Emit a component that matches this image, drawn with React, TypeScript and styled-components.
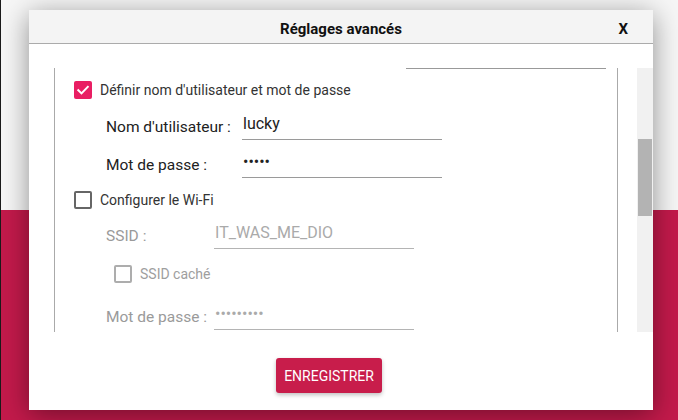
import React from "react";
import styled, { createGlobalStyle } from "styled-components";

const Global = createGlobalStyle`
  html, body { margin: 0; padding: 0; }
  body {
    font-family: Roboto, "Liberation Sans", sans-serif;
    width: 678px;
    height: 420px;
    overflow: hidden;
  }
`;

const Page = styled.div`
  position: relative;
  width: 678px;
  height: 420px;
  box-sizing: border-box;
  border-left: 1px solid #1b1b1b;
  display: flex;
  flex-direction: column;
`;

const Upper = styled.div`
  height: 210px;
  background: #f6f6f6;
`;

const Band = styled.div`
  flex: 1;
  background: #c31a4b;
`;

const Dialog = styled.div`
  position: absolute;
  top: 10px;
  left: 28px;
  width: 624px;
  height: 400px;
  background: #fff;
  box-shadow: 0 5px 26px rgba(0, 0, 0, 0.42);
  display: flex;
  flex-direction: column;
`;

const Header = styled.header`
  height: 34px;
  box-sizing: border-box;
  padding: 4px 25px 0;
  background: #f4f4f4;
  border-bottom: 1px solid #ababab;
  display: grid;
  grid-template-columns: 1fr auto 1fr;
  align-items: center;
`;

const Title = styled.h1`
  grid-column: 2;
  margin: 0;
  font-size: 15px;
  font-weight: 700;
  color: #111;
`;

const Close = styled.button`
  justify-self: end;
  border: none;
  background: none;
  padding: 0;
  font-family: inherit;
  font-size: 15px;
  font-weight: 700;
  color: #111;
`;

const Body = styled.div`
  display: flex;
  margin-top: 24px;
  height: 264px;
`;

const Panel = styled.div`
  flex: 1;
  margin: 0 19px 0 25px;
  border-left: 1px solid #aaa;
  border-right: 1px solid #aaa;
  padding-left: 19px;
  overflow: hidden;
  display: flex;
  flex-direction: column;
`;

const TopRule = styled.div`
  flex-shrink: 0;
  height: 1px;
  width: 200px;
  margin-left: 332px;
  background: #999;
`;

const Track = styled.div`
  width: 16px;
  background: #f1f1f1;
  display: flex;
  flex-direction: column;
  align-items: center;
`;

const Thumb = styled.div`
  width: 14px;
  height: 77px;
  margin-top: 71px;
  background: #b3b3b3;
`;

const CheckRow = styled.label<{ $indent?: number; $top: number }>`
  flex-shrink: 0;
  display: flex;
  align-items: center;
  gap: 8px;
  height: 18px;
  margin-left: ${(p) => p.$indent ?? 0}px;
  margin-top: ${(p) => p.$top}px;
`;

const Box = styled.span<{ $checked?: boolean; $muted?: boolean }>`
  box-sizing: border-box;
  width: 18px;
  height: 18px;
  border-radius: 2px;
  display: flex;
  align-items: center;
  justify-content: center;
  background: ${(p) => (p.$checked ? "#e91e63" : "#fff")};
  border: ${(p) =>
    p.$checked ? "none" : `2px solid ${p.$muted ? "#adadad" : "#666"}`};
`;

const CheckText = styled.span<{ $muted?: boolean }>`
  font-size: 14px;
  color: ${(p) => (p.$muted ? "#9e9e9e" : "#333")};
  white-space: nowrap;
`;

const FieldRow = styled.div<{ $labelWidth: number; $top: number }>`
  flex-shrink: 0;
  display: grid;
  grid-template-columns: ${(p) => p.$labelWidth}px 200px;
  align-items: end;
  margin-left: 32px;
  margin-top: ${(p) => p.$top}px;
`;

const FieldLabel = styled.span<{ $muted?: boolean }>`
  font-size: 15.5px;
  line-height: 18px;
  margin-bottom: 4px;
  white-space: nowrap;
  color: ${(p) => (p.$muted ? "#9a9a9a" : "#212121")};
`;

const TextInput = styled.input`
  box-sizing: border-box;
  width: 200px;
  height: 32px;
  border: none;
  border-bottom: 1px solid #9a9a9a;
  padding: 0 0 1px 1px;
  margin: 0;
  font-family: Roboto, "Liberation Sans", sans-serif;
  font-size: 16px;
  color: #222;
  background: transparent;
  outline: none;
  &:disabled {
    color: #aaa;
    -webkit-text-fill-color: #aaa;
    opacity: 1;
    border-bottom-color: #b4b4b4;
  }
`;

const Footer = styled.div`
  display: flex;
  justify-content: center;
  padding-right: 24px;
  margin-top: 26px;
`;

const SaveButton = styled.button`
  height: 35px;
  width: 106px;
  border: none;
  border-radius: 3px;
  background: #c81d4b;
  color: #fff;
  font-family: Roboto, "Liberation Sans", sans-serif;
  font-size: 14px;
  text-transform: uppercase;
  box-shadow: 0 2px 4px rgba(0, 0, 0, 0.25);
  padding: 0;
`;

function CheckMark() {
  return (
    <svg width="14" height="14" viewBox="0 0 14 14">
      <polyline
        points="2.3,7.2 5.5,10.4 11.8,3.8"
        fill="none"
        stroke="#fff"
        strokeWidth="2"
        strokeLinecap="square"
      />
    </svg>
  );
}

export default function App() {
  return (
    <>
      <Global />
      <Page>
        <Upper />
        <Band />
        <Dialog role="dialog">
          <Header>
            <Title>Réglages avancés</Title>
            <Close>X</Close>
          </Header>
          <Body>
            <Panel>
              <TopRule />
              <CheckRow $top={12}>
                <Box $checked>
                  <CheckMark />
                </Box>
                <CheckText>Définir nom d'utilisateur et mot de passe</CheckText>
              </CheckRow>
              <FieldRow $labelWidth={136} $top={9}>
                <FieldLabel>Nom d'utilisateur :</FieldLabel>
                <TextInput defaultValue="lucky" />
              </FieldRow>
              <FieldRow $labelWidth={136} $top={6}>
                <FieldLabel>Mot de passe :</FieldLabel>
                <TextInput type="password" defaultValue="lucky" />
              </FieldRow>
              <CheckRow $top={13}>
                <Box />
                <CheckText>Configurer le Wi-Fi</CheckText>
              </CheckRow>
              <FieldRow $labelWidth={108} $top={8}>
                <FieldLabel $muted>SSID :</FieldLabel>
                <TextInput disabled defaultValue="IT_WAS_ME_DIO" />
              </FieldRow>
              <CheckRow $indent={40} $top={16}>
                <Box $muted />
                <CheckText $muted>SSID caché</CheckText>
              </CheckRow>
              <FieldRow $labelWidth={108} $top={15}>
                <FieldLabel $muted>Mot de passe :</FieldLabel>
                <TextInput disabled type="password" defaultValue="123456789" />
              </FieldRow>
            </Panel>
            <Track>
              <Thumb />
            </Track>
          </Body>
          <Footer>
            <SaveButton>Enregistrer</SaveButton>
          </Footer>
        </Dialog>
      </Page>
    </>
  );
}
